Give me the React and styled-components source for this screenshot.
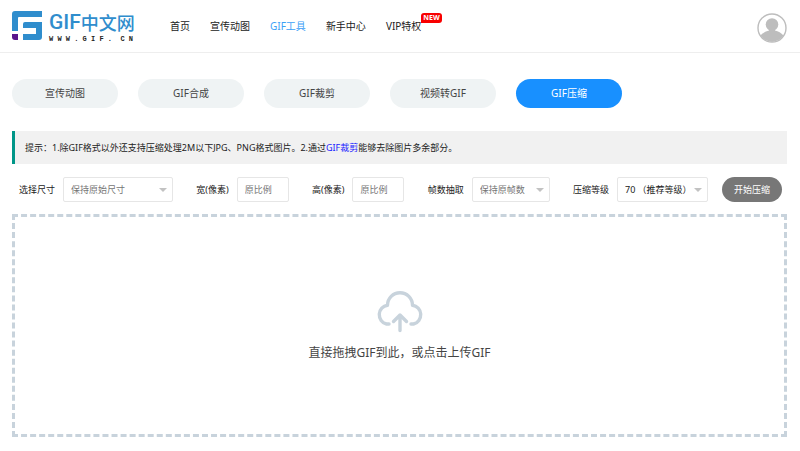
import React from "react";
import styled, { createGlobalStyle, css } from "styled-components";

const GlobalStyle = createGlobalStyle`
  *, *::before, *::after { box-sizing: border-box; }
  body {
    margin: 0;
    background: #fff;
    color: #222;
    font-family: "Noto Sans", "Noto Sans CJK SC", sans-serif;
    font-size: 9px;
    line-height: 16px;
  }
  button, input, select { font: inherit; margin: 0; }
  a { text-decoration: none; }
`;

const Header = styled.header`
  display: flex;
  align-items: center;
  height: 53px;
  padding: 0 13px 0 12px;
  border-bottom: 1px solid #eee;
`;

const Logo = styled.a`
  display: flex;
  align-items: center;
  gap: 7px;
  width: 124px;
  color: #2f8dcd;
  white-space: nowrap;
`;

const LogoMark = styled.svg`
  flex: none;
  width: 30px;
  height: 30px;
`;

const LogoText = styled.span`
  display: flex;
  flex-direction: column;
`;

const LogoName = styled.span`
  display: flex;
  align-items: center;
  font-family: "Noto Sans CJK SC", sans-serif;
  font-size: 18px;
  font-weight: 500;
  line-height: 26px;
`;

const LogoLatin = styled.span`
  font-family: Roboto, sans-serif;
  font-size: 21px;
`;

const LogoSite = styled.span`
  color: #222;
  font-family: "Liberation Mono", monospace;
  font-size: 7px;
  font-weight: 700;
  line-height: 8px;
  white-space: pre;
`;

const Nav = styled.nav`
  display: flex;
  gap: 20px;
  margin-left: 34px;
  font-size: 10px;
  white-space: nowrap;
`;

const NavLink = styled.a`
  position: relative;
  color: ${({ $active }) => ($active ? "#3ba0f6" : "#222")};
`;

const NewBadge = styled.span`
  position: absolute;
  left: 100%;
  top: -5px;
  padding: 0 2px;
  border-radius: 3px 3px 3px 0;
  background: #f80000;
  color: #fff;
  font-size: 7px;
  font-weight: 700;
  line-height: 10px;
`;

const Account = styled.button`
  display: flex;
  margin-left: auto;
  padding: 3px 0 0;
  border: 0;
  background: none;
`;

const Main = styled.main`
  padding: 26px 13px 14px 12px;
`;

const Tools = styled.nav`
  display: flex;
  gap: 20px;
`;

const ToolLink = styled.a`
  width: 106px;
  border-radius: 15px;
  background: ${({ $active }) => ($active ? "#1890ff" : "#eff3f4")};
  color: ${({ $active }) => ($active ? "#fff" : "#444")};
  font-size: 10px;
  line-height: 29px;
  text-align: center;
`;

const Tip = styled.p`
  margin: 23px 0 0;
  padding: 0 10px;
  border-left: 3px solid #009688;
  background: #f1f1f1;
  line-height: 33px;
  a { color: #1a1aff; }
`;

const Options = styled.form`
  display: flex;
  justify-content: space-between;
  align-items: center;
  margin-top: 13px;
  padding: 0 5px 0 7px;
  white-space: nowrap;
`;

const Field = styled.label`
  display: flex;
  align-items: center;
  gap: 8px;
`;

const Actions = styled.div`
  display: flex;
  align-items: center;
  gap: 14px;
`;

const control = css`
  width: ${({ $width }) => $width}px;
  height: 25px;
  padding: 0 7px;
  border: 1px solid #e6e6e6;
  border-radius: 2px;
  background: #fff;
  color: ${({ $dark }) => ($dark ? "#222" : "#757575")};
  outline: 0;
`;

const TextInput = styled.input`
  ${control}
  &::placeholder { color: #757575; opacity: 1; }
`;

const SelectWrap = styled.span`
  display: grid;
  align-items: center;
  > * { grid-area: 1 / 1; }
`;

const Select = styled.select`
  ${control}
  padding-right: 12px;
  appearance: none;
`;

const Caret = styled.span`
  justify-self: end;
  margin-right: 6px;
  border: 4px solid transparent;
  border-top-color: #c2c2c2;
  border-bottom: 0;
  pointer-events: none;
`;

const StartButton = styled.button`
  width: 60px;
  height: 25px;
  padding: 0;
  border: 0;
  border-radius: 13px;
  background: #777;
  color: #fff;
`;

const DropZone = styled.button`
  display: flex;
  flex-direction: column;
  align-items: center;
  width: 100%;
  margin-top: 12px;
  padding: 74px 0 72px;
  border: 3px dashed #c8d3dc;
  background: none;
  color: #444;
  font-size: 12px;
  line-height: 18px;
`;

const CloudIcon = styled.svg`
  width: 50px;
  height: 42px;
  margin-bottom: 11px;
`;

const tools = ["宣传动图", "GIF合成", "GIF裁剪", "视频转GIF", "GIF压缩"];
const navItems = ["首页", "宣传动图", "GIF工具", "新手中心", "VIP特权"];

function SelectField({ label, options, width, dark }) {
  return (
    <Field>
      {label}
      <SelectWrap>
        <Select $width={width} $dark={dark}>
          {options.map((option) => (
            <option key={option}>{option}</option>
          ))}
        </Select>
        <Caret />
      </SelectWrap>
    </Field>
  );
}

export default function App() {
  return (
    <>
      <GlobalStyle />
      <Header>
        <Logo href="#">
          <LogoMark viewBox="0 0 30 30" aria-hidden="true">
            <path d="M3 0H30V6H7Q6 6 6 7V20H0V3Q0 0 3 0Z" fill="#2f8dcd" />
            <path d="M13 11H30V26Q30 29 27 29H11V23H24V17H11V13Q11 11 13 11Z" fill="#2f8dcd" />
            <path d="M0 23H6V29H3Q0 29 0 26Z" fill="#59148c" />
          </LogoMark>
          <LogoText>
            <LogoName>
              <LogoLatin>GIF</LogoLatin>中文网
            </LogoName>
            <LogoSite>W W W . G I F .  C N</LogoSite>
          </LogoText>
        </Logo>
        <Nav>
          {navItems.map((item) => (
            <NavLink key={item} href="#" $active={item === "GIF工具"}>
              {item}
              {item === "VIP特权" && <NewBadge>NEW</NewBadge>}
            </NavLink>
          ))}
        </Nav>
        <Account type="button" aria-label="账户">
          <svg width="30" height="30" viewBox="0 0 30 30">
            <circle cx="15" cy="15" r="14" fill="#fff" stroke="#bdbdbd" strokeWidth="1.4" />
            <circle cx="15" cy="11.5" r="6.3" fill="#bdbdbd" />
            <path d="M3.5 22.5Q7 18.5 12 17.5V16H18V17.5Q23 18.5 26.5 22.5A13.8 13.8 0 0 1 3.5 22.5Z" fill="#bdbdbd" />
          </svg>
        </Account>
      </Header>
      <Main>
        <Tools>
          {tools.map((tool) => (
            <ToolLink key={tool} href="#" $active={tool === "GIF压缩"}>
              {tool}
            </ToolLink>
          ))}
        </Tools>
        <Tip>
          提示：1.除GIF格式以外还支持压缩处理2M以下JPG、PNG格式图片。2.通过<a href="#">GIF裁剪</a>能够去除图片多余部分。
        </Tip>
        <Options>
          <SelectField label="选择尺寸" options={["保持原始尺寸"]} width={110} />
          <Field>
            宽(像素)
            <TextInput $width={52} placeholder="原比例" />
          </Field>
          <Field>
            高(像素)
            <TextInput $width={52} placeholder="原比例" />
          </Field>
          <SelectField label="帧数抽取" options={["保持原帧数"]} width={78} />
          <Actions>
            <SelectField label="压缩等级" options={["70 （推荐等级）"]} width={91} dark />
            <StartButton type="button">开始压缩</StartButton>
          </Actions>
        </Options>
        <DropZone type="button">
          <CloudIcon
            viewBox="0 -2 50 42"
            fill="none"
            stroke="#c8d3dc"
            strokeWidth="3.4"
            strokeLinecap="round"
            strokeLinejoin="round"
            aria-hidden="true"
          >
            <path d="M14 31H11.5A9.6 9.6 0 0 1 12.5 12.2A12.5 12.5 0 0 1 37.5 12.2A9.6 9.6 0 0 1 38.5 31H36" />
            <path d="M25 37.5V22.5M18.5 28.5L25 22L31.5 28.5" />
          </CloudIcon>
          直接拖拽GIF到此，或点击上传GIF
        </DropZone>
      </Main>
    </>
  );
}
